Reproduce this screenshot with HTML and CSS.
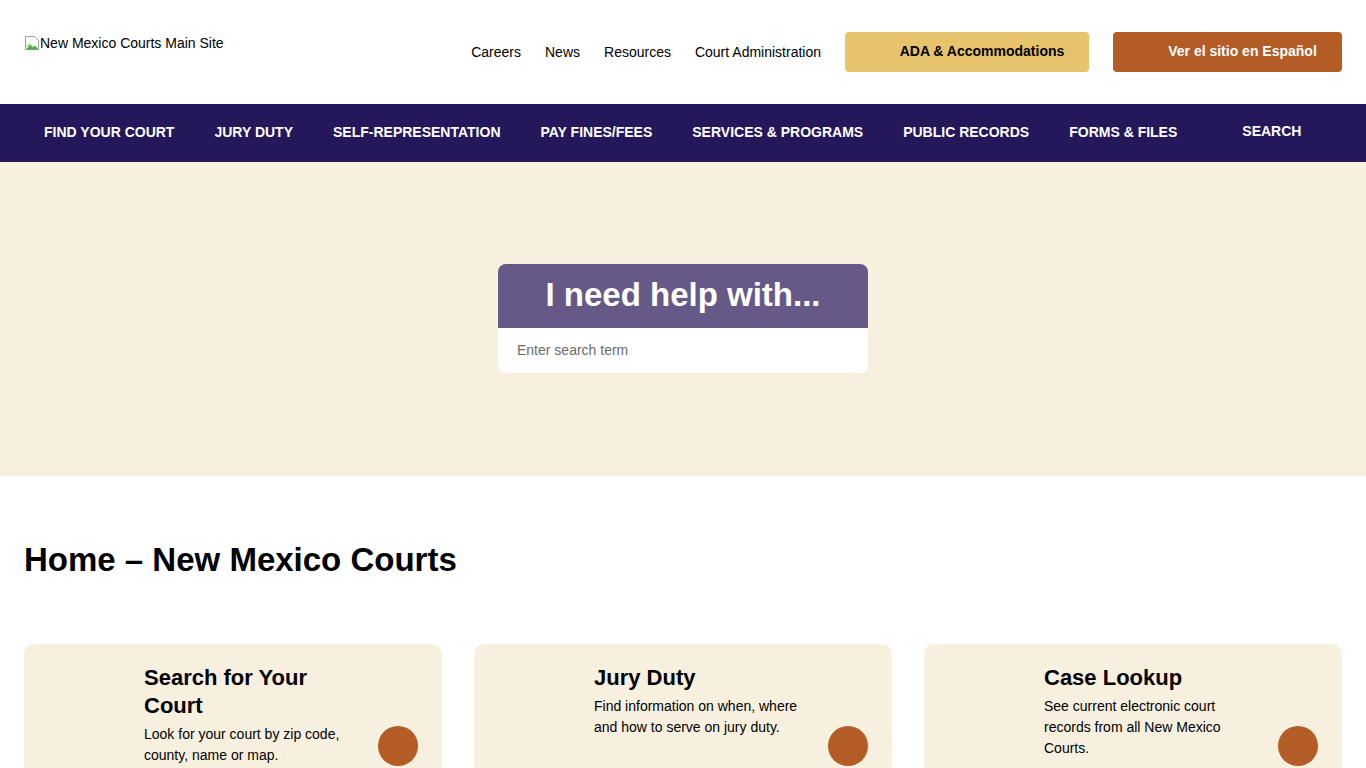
FILE: index.html
```html
<!DOCTYPE html>
<html lang="en">
<head>
  <meta charset="UTF-8">
  <meta name="viewport" content="width=device-width, initial-scale=1.0">
  <title>Home – New Mexico Courts</title>
  <link rel="stylesheet" href="styles.css">
</head>
<body>
  <header class="top">
    <a class="logo" href="#">
      <svg class="broken" width="16" height="16" viewBox="0 0 16 16">
        <path d="M1.5 1.5h9l4 4v9h-13z" fill="#fff" stroke="#9aa0a6"/>
        <path d="M2 14.5l4-5 3 3 2-2 3.5 4z" fill="#4caf50"/>
        <path d="M2 11c3-2 6-1 8 1" fill="none" stroke="#8bc34a"/>
      </svg>New Mexico Courts Main Site
    </a>
    <nav class="util">
      <a href="#">Careers</a>
      <a href="#">News</a>
      <a href="#">Resources</a>
      <a href="#">Court Administration</a>
    </nav>
    <a class="btn btn-ada" href="#">ADA &amp; Accommodations</a>
    <a class="btn btn-es" href="#">Ver el sitio en Español</a>
  </header>

  <nav class="mainnav">
    <a href="#">Find Your Court</a>
    <a href="#">Jury Duty</a>
    <a href="#">Self-Representation</a>
    <a href="#">Pay Fines/Fees</a>
    <a href="#">Services &amp; Programs</a>
    <a href="#">Public Records</a>
    <a href="#">Forms &amp; Files</a>
    <a href="#" class="search-link">Search</a>
  </nav>

  <section class="hero">
    <div class="helpbox">
      <h2>I need help with...</h2>
      <input type="text" placeholder="Enter search term">
    </div>
  </section>

  <main class="content">
    <h1>Home – New Mexico Courts</h1>
    <div class="cards">
      <div class="card">
        <div class="card-text">
          <h3>Search for Your Court</h3>
          <p>Look for your court by zip code, county, name or map.</p>
        </div>
        <span class="dot"></span>
      </div>
      <div class="card">
        <div class="card-text">
          <h3>Jury Duty</h3>
          <p>Find information on when, where and how to serve on jury duty.</p>
        </div>
        <span class="dot"></span>
      </div>
      <div class="card">
        <div class="card-text">
          <h3>Case Lookup</h3>
          <p>See current electronic court records from all New Mexico Courts.</p>
        </div>
        <span class="dot"></span>
      </div>
    </div>
  </main>
</body>
</html>
```

FILE: styles.css
```css
body {
  margin: 0;
  font-family: "Liberation Sans", Arial, sans-serif;
  color: #000;
  background: #fff;
}
a {
  text-decoration: none;
  color: inherit;
}

/* header */
.top {
  height: 104px;
  display: flex;
  align-items: flex-start;
  padding: 0 24px;
  box-sizing: border-box;
}
.logo {
  display: flex;
  align-items: center;
  font-size: 14px;
  color: #000;
  margin-top: 35px;
}
.util {
  display: flex;
  gap: 24px;
  margin-left: auto;
  margin-top: 44px;
  font-size: 14px;
}
.btn {
  height: 40px;
  margin-top: 32px;
  border-radius: 4px;
  display: flex;
  align-items: center;
  justify-content: center;
  font-size: 14px;
  font-weight: bold;
  box-sizing: border-box;
  padding-left: 30px;
  padding-bottom: 2px;
}
.btn-ada {
  width: 244px;
  background: #e7c36b;
  color: #000;
  margin-left: 24px;
}
.btn-es {
  width: 229px;
  background: #b35c26;
  color: #fff;
  margin-left: 24px;
}

/* main navigation */
.mainnav {
  height: 58px;
  background: #24185b;
  display: flex;
  align-items: center;
  padding: 0 24px 2px;
  box-sizing: border-box;
}
.mainnav a {
  color: #fff;
  font-weight: bold;
  font-size: 14px;
  text-transform: uppercase;
  padding: 0 20px;
}
.mainnav .search-link {
  margin-left: 25px;
  margin-top: -2px;
}

/* hero */
.hero {
  height: 314px;
  background: #f8f0df;
  display: flex;
  justify-content: center;
  padding-top: 102px;
  box-sizing: border-box;
}
.helpbox {
  width: 370px;
  height: 109px;
  border-radius: 8px;
  overflow: hidden;
  background: #fff;
}
.helpbox h2 {
  margin: 0;
  height: 64px;
  background: #665987;
  color: #fff;
  font-size: 33px;
  font-weight: bold;
  text-align: center;
  line-height: 62px;
}
.helpbox input {
  width: 100%;
  height: 45px;
  border: 0;
  padding: 0 19px 2px;
  box-sizing: border-box;
  font-family: inherit;
  font-size: 14px;
  outline: none;
}
.helpbox input::placeholder {
  color: #6b6b6b;
}

/* content */
.content {
  padding: 0 24px;
}
.content h1 {
  margin: 0;
  padding-top: 64px;
  font-size: 33px;
  line-height: 40px;
}
.cards {
  display: grid;
  grid-template-columns: repeat(3, 1fr);
  gap: 32px;
  margin-top: 64px;
}
.card {
  background: #f8f0df;
  border-radius: 10px;
  height: 160px;
  display: flex;
  padding: 20px 24px 0 120px;
}
.card-text {
  width: 214px;
}
.card h3 {
  margin: 0;
  font-size: 22px;
  line-height: 28px;
}
.card p {
  margin: 4px 0 0;
  font-size: 14px;
  line-height: 21px;
}
.dot {
  width: 40px;
  height: 40px;
  border-radius: 50%;
  background: #b35c26;
  margin-left: auto;
  margin-top: 62px;
  flex-shrink: 0;
}
```
